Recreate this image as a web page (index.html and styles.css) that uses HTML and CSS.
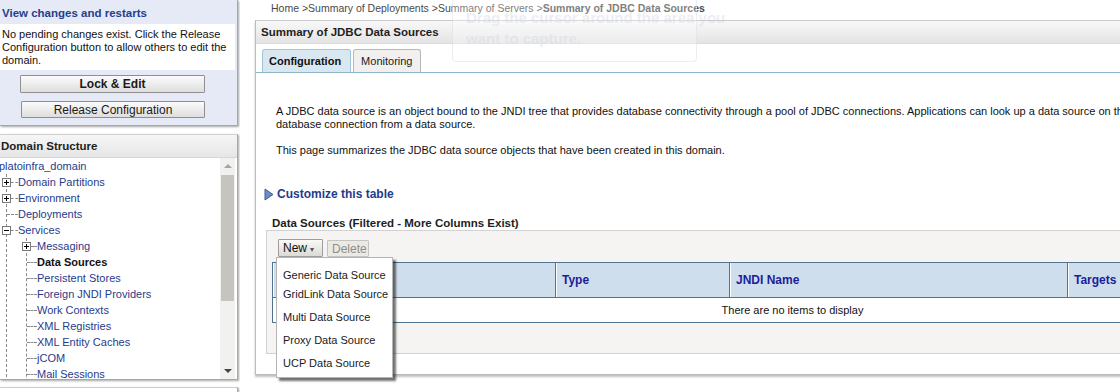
FILE: index.html
```html
<!DOCTYPE html>
<html lang="en">
<head>
    <meta charset="UTF-8">
    <title>Summary of JDBC Data Sources</title>
    <link rel="stylesheet" href="styles.css">
</head>
<body>
<div class="page">
    <!-- Left column -->
    <aside class="sidebar">
        <section class="box changes">
            <h3>View changes and restarts</h3>
            <p>No pending changes exist. Click the Release Configuration button to allow others to edit the domain.</p>
            <div class="change-btns">
                <button class="lock-btn">Lock &amp; Edit</button>
                <button class="release-btn">Release Configuration</button>
            </div>
        </section>

        <section class="box domain">
            <h3>Domain Structure</h3>
            <div class="tree-wrap">
                <div class="tree">
                    <div class="row root">platoinfra_domain</div>
                    <ul class="lvl1">
                        <li><div class="row"><span class="exp"><svg width="9" height="9" viewBox="0 0 9 9"><rect x="0.5" y="0.5" width="8" height="8" fill="#fff" stroke="#7a7a7a"/><path d="M2 4.5h5M4.5 2v5" stroke="#000"/></svg></span><span class="dash short"></span><a>Domain Partitions</a></div></li>
                        <li><div class="row"><span class="exp"><svg width="9" height="9" viewBox="0 0 9 9"><rect x="0.5" y="0.5" width="8" height="8" fill="#fff" stroke="#7a7a7a"/><path d="M2 4.5h5M4.5 2v5" stroke="#000"/></svg></span><span class="dash short"></span><a>Environment</a></div></li>
                        <li><div class="row"><span class="dash"></span><a>Deployments</a></div></li>
                        <li>
                            <div class="row"><span class="exp"><svg width="9" height="9" viewBox="0 0 9 9"><rect x="0.5" y="0.5" width="8" height="8" fill="#fff" stroke="#7a7a7a"/><path d="M2 4.5h5" stroke="#000"/></svg></span><span class="dash short"></span><a>Services</a></div>
                            <ul class="lvl2">
                                <li><div class="row"><span class="exp"><svg width="9" height="9" viewBox="0 0 9 9"><rect x="0.5" y="0.5" width="8" height="8" fill="#fff" stroke="#7a7a7a"/><path d="M2 4.5h5M4.5 2v5" stroke="#000"/></svg></span><span class="dash short"></span><a>Messaging</a></div></li>
                                <li><div class="row"><span class="dash"></span><b>Data Sources</b></div></li>
                                <li><div class="row"><span class="dash"></span><a>Persistent Stores</a></div></li>
                                <li><div class="row"><span class="dash"></span><a>Foreign JNDI Providers</a></div></li>
                                <li><div class="row"><span class="dash"></span><a>Work Contexts</a></div></li>
                                <li><div class="row"><span class="dash"></span><a>XML Registries</a></div></li>
                                <li><div class="row"><span class="dash"></span><a>XML Entity Caches</a></div></li>
                                <li><div class="row"><span class="dash"></span><a>jCOM</a></div></li>
                                <li><div class="row"><span class="dash"></span><a>Mail Sessions</a></div></li>
                            </ul>
                        </li>
                    </ul>
                </div>
                <div class="scrollbar">
                    <div class="arrow up"></div>
                    <div class="track"><div class="thumb"></div></div>
                    <div class="arrow down"></div>
                </div>
            </div>
        </section>

        <section class="box stub"></section>
    </aside>

    <!-- Main content -->
    <main class="main">
        <div class="crumbs">Home &gt;Summary of Deployments &gt;Summary of Servers &gt;<b>Summary of JDBC Data Sources</b></div>

        <div class="panel">
            <h2 class="panel-title">Summary of JDBC Data Sources</h2>
            <div class="tabs">
                <span class="tab active">Configuration</span>
                <span class="tab">Monitoring</span>
            </div>

            <div class="panel-body">
                <p class="intro">A JDBC data source is an object bound to the JNDI tree that provides database connectivity through a pool of JDBC connections. Applications can look up a data source on the JNDI tree and then borrow a<br>database connection from a data source.</p>
                <p class="intro">This page summarizes the JDBC data source objects that have been created in this domain.</p>

                <div class="customize">
                    <svg width="10" height="13" viewBox="0 0 10 13"><path d="M1 1 L9 6.5 L1 12 Z" fill="#6f8cc4" stroke="#3f5c98"/></svg>
                    <a>Customize this table</a>
                </div>

                <h4 class="table-title">Data Sources (Filtered - More Columns Exist)</h4>

                <div class="table-box">
                    <div class="toolbar">
                        <div class="new-wrap">
                            <button class="new-btn">New <span class="caret">&#9662;</span></button>
                            <ul class="menu">
                                <li class="m-generic">Generic Data Source</li>
                                <li class="m-gridlink">GridLink Data Source</li>
                                <li class="m-item first">Multi Data Source</li>
                                <li class="m-item">Proxy Data Source</li>
                                <li class="m-item">UCP Data Source</li>
                            </ul>
                        </div>
                        <button class="delete-btn" disabled>Delete</button>
                    </div>

                    <table class="ds-table">
                        <colgroup>
                            <col style="width: 283px">
                            <col style="width: 174px">
                            <col style="width: 338px">
                            <col style="width: 245px">
                        </colgroup>
                        <thead>
                            <tr>
                                <th></th>
                                <th>Type</th>
                                <th>JNDI Name</th>
                                <th>Targets &#8593;</th>
                            </tr>
                        </thead>
                        <tbody>
                            <tr><td colspan="4">There are no items to display</td></tr>
                        </tbody>
                    </table>
                </div>
            </div>
        </div>

        <!-- faint screen-capture hint left over in the screenshot -->
        <div class="capture-hint">Drag the cursor around the area you<br>want to capture.</div>
    </main>
</div>
</body>
</html>
```

FILE: styles.css
```css
/* General page */
body {
    margin: 0;
    width: 1120px;
    height: 392px;
    overflow: hidden;
    background: #fff;
    font-family: "Liberation Sans", Arial, sans-serif;
    font-size: 11px;
    color: #111;
}

.page {
    display: flex;
    align-items: flex-start;
}

a {
    color: #1f3c8b;
}

/* Sidebar */
.sidebar {
    width: 240px;
    flex: none;
    height: 392px;
    overflow: hidden;
}

.box {
    border-right: 1px solid #a7a7a7;
    border-bottom: 1px solid #a7a7a7;
    box-shadow: 1px 1px 2px rgba(0, 0, 0, 0.35);
    margin-right: 2px;
}

.changes {
    background: #e6eaf6;
    padding-bottom: 7px;
}

.changes h3 {
    margin: 0;
    height: 24px;
    line-height: 26px;
    padding-left: 2px;
    font-size: 11.5px;
    color: #243f8d;
}

.changes p {
    margin: 0 2px 0 0;
    background: #fff;
    padding: 4px 2px 3px 2px;
    line-height: 13px;
    font-size: 11px;
}

.change-btns {
    display: flex;
    flex-direction: column;
    padding: 5px 0 0 20px;
    gap: 8px;
}

.change-btns button {
    width: 185px;
    height: 18px;
    padding: 0;
    border: 1px solid #8f8f8f;
    border-radius: 1px;
    background: linear-gradient(#fbfbfb, #dedede);
    font-family: "Liberation Sans", Arial, sans-serif;
    font-size: 12px;
    color: #1a1a1a;
}

.lock-btn {
    font-weight: bold;
}

.release-btn {
    margin-left: 1px;
    width: 184px !important;
    height: 17px !important;
}

.domain {
    margin-top: 8px;
    background: #fff;
    border-top: 1px solid #cfcfcf;
}

.domain h3 {
    margin: 0;
    height: 22px;
    line-height: 22px;
    padding-left: 1px;
    font-size: 11.5px;
    color: #222;
    background: linear-gradient(#f6f6f6, #e6e6e6);
    border-bottom: 1px solid #d6d6d6;
}

.tree-wrap {
    display: flex;
    height: 221px;
}

.tree {
    flex: 1;
    overflow: hidden;
}

.tree ul {
    list-style: none;
    margin: 0;
    padding: 0;
    border-left: 1px dashed #8a8a8a;
}

.tree .lvl1 {
    margin-left: 6px;
}

.tree .lvl2 {
    margin-left: 19px;
    padding-bottom: 40px;
}

.row {
    display: flex;
    align-items: center;
    height: 16px;
    white-space: nowrap;
}

.root {
    margin-left: -1px;
    color: #1f3c8b;
}

.row a {
    color: #1f3c8b;
}

.row b {
    color: #111;
}

.exp {
    display: flex;
    margin-left: -5px;
    width: 9px;
    height: 9px;
}

.dash {
    width: 11px;
    border-top: 1px dashed #8a8a8a;
}

.dash.short {
    width: 7px;
}

.lvl2 .dash {
    width: 10px;
}

.lvl2 .dash.short {
    width: 6px;
}

/* Fake scrollbar */
.scrollbar {
    width: 15px;
    flex: none;
    margin-right: 2px;
    background: #f1f1f0;
    display: flex;
    flex-direction: column;
}

.arrow {
    height: 16px;
    display: flex;
    align-items: center;
    justify-content: center;
}

.arrow.up::before {
    content: "";
    border: 4px solid transparent;
    border-bottom: 4px solid #a5a5a5;
    margin-top: -4px;
}

.arrow.down::before {
    content: "";
    border: 4px solid transparent;
    border-top: 4px solid #444;
    margin-top: 4px;
}

.track {
    flex: 1;
    padding: 1px 1px 0 1px;
}

.thumb {
    height: 126px;
    background: #c6c4be;
}

.stub {
    margin-top: 7px;
    height: 40px;
    border-top: 1px solid #cfcfcf;
}

/* Main area */
.main {
    position: relative;
    flex: none;
    width: 1220px;
    margin-left: 15px;
}

.crumbs {
    height: 20px;
    line-height: 16px;
    padding-left: 16px;
    font-size: 10.5px;
    color: #4a4a4a;
}

.panel {
    border-left: 1px solid #bdbdbd;
    border-bottom: 1px solid #bdbdbd;
    box-shadow: 0 2px 2px rgba(0, 0, 0, 0.25);
    padding-bottom: 20px;
}

.panel-title {
    margin: 0;
    height: 22px;
    line-height: 22px;
    padding-left: 5px;
    font-size: 11.5px;
    color: #1e1e1e;
    background: linear-gradient(#f8f8f8, #e4e4e4);
    border-top: 1px solid #cacaca;
    border-bottom: 1px solid #dcdcdc;
}

.tabs {
    display: flex;
    gap: 2px;
    padding: 5px 0 0 6px;
    border-bottom: 1px solid #8db6cd;
}

.tab {
    height: 22px;
    line-height: 22px;
    padding: 0 8px 0 7px;
    border: 1px solid #b8b8b8;
    border-bottom: none;
    border-radius: 3px 3px 0 0;
    background: #f1f0ee;
    color: #222;
}

.tab.active {
    background: #d9e8f0;
    border-color: #a2c5d8;
    font-weight: bold;
    color: #111;
    padding: 0 9px 0 6px;
}

.panel-body {
    padding-top: 32px;
}

.intro {
    margin: 0 0 13px 20px;
    line-height: 13px;
    white-space: nowrap;
}

.customize {
    display: flex;
    align-items: center;
    gap: 3px;
    height: 16px;
    margin: 29px 0 0 8px;
}

.customize a {
    font-weight: bold;
    font-size: 12px;
    color: #1f3c8b;
}

.table-title {
    margin: 14px 0 0 16px;
    line-height: 14px;
    font-size: 11.5px;
    color: #1e1e1e;
}

.table-box {
    margin-left: 10px;
    background: #f5f4f2;
    border: 1px solid #d2d2d2;
    padding: 8px 0 30px 5px;
}

.toolbar {
    display: flex;
    align-items: flex-start;
    gap: 4px;
    padding-left: 6px;
    height: 23px;
}

.new-wrap {
    position: relative;
}

.new-btn,
.delete-btn {
    height: 18px;
    padding: 0 4px;
    font-family: "Liberation Sans", Arial, sans-serif;
    font-size: 12px;
    border-radius: 1px;
}

.new-btn {
    width: 45px;
    text-align: left;
    border: 1px solid #9d9d9d;
    background: linear-gradient(#f9f9f7, #dcdad4);
    color: #111;
}

.caret {
    font-size: 8px;
    color: #555;
}

.delete-btn {
    margin-top: 1px;
    height: 17px;
    width: 42px;
    border: 1px solid #c3c3c0;
    background: #ebe9e3;
    color: #8d8d8d;
}

/* New dropdown menu */
.menu {
    position: absolute;
    left: -2px;
    top: 18px;
    width: 115px;
    margin: 0;
    padding: 7px 0 2px 0;
    list-style: none;
    background: #fff;
    border: 1px solid #b5b5b5;
    box-shadow: 3px 3px 2px rgba(0, 0, 0, 0.55);
    z-index: 5;
    font-size: 11px;
    color: #1a1a1a;
}

.menu li {
    padding-left: 6px;
    white-space: nowrap;
}

.m-generic {
    height: 20px;
    line-height: 20px;
}

.m-gridlink {
    height: 18px;
    line-height: 18px;
}

.m-item {
    height: 23px;
    line-height: 23px;
}

.m-item.first {
    margin-top: 3px;
}

/* Data sources table */
.ds-table {
    table-layout: fixed;
    width: 1040px;
    border-collapse: collapse;
    background: #fff;
}

.ds-table th {
    height: 34px;
    text-align: left;
    padding: 0 6px;
    background: #cfdeed;
    color: #1d1d9a;
    font-size: 12px;
    border: 1px solid #52738f;
    box-shadow: inset 1px 0 0 #fff;
}

.ds-table td {
    height: 22px;
    text-align: center;
    border: 1px solid #52738f;
    color: #111;
}

/* leftover hint from the screen capture tool */
.capture-hint {
    position: absolute;
    left: 197px;
    top: -2px;
    width: 230px;
    height: 54px;
    padding: 8px 0 0 13px;
    border: 1px solid rgba(215, 215, 215, 0.45);
    border-radius: 4px;
    background: rgba(255, 255, 255, 0.3);
    font-size: 15px;
    font-weight: bold;
    line-height: 21px;
    white-space: nowrap;
    color: rgba(205, 212, 225, 0.4);
}
```
